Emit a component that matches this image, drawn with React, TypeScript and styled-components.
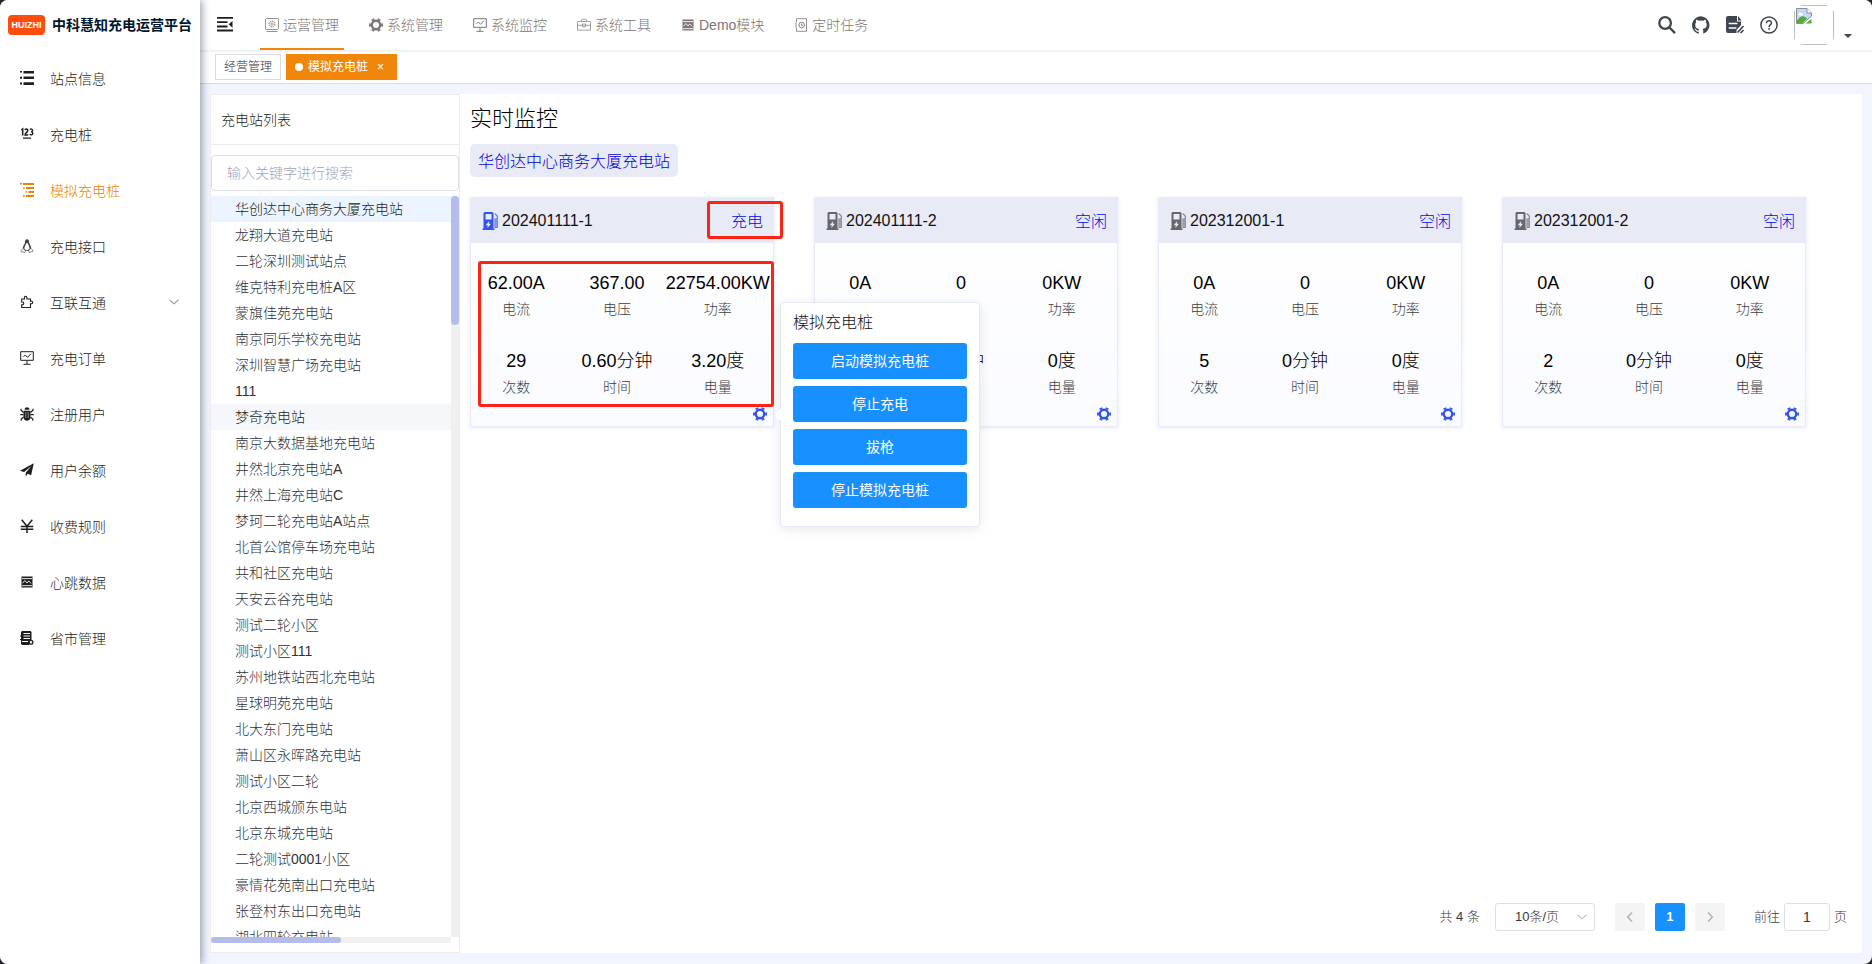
import React, { useState } from 'react';
import styled, { createGlobalStyle, css } from 'styled-components';

const GlobalStyle = createGlobalStyle`
  *, *::before, *::after { box-sizing: border-box; }
  body {
    margin: 0;
    background: #26282c;
    color: #1c1e21;
    font-family: "Liberation Sans", "Noto Sans CJK SC", sans-serif;
    font-size: 14px;
    line-height: 20px;
    font-weight: 300;
  }
  button, input, select { font: inherit; color: inherit; margin: 0; }
  button { cursor: pointer; }
  a { color: inherit; text-decoration: none; }
  h1, h2, h3, p, ul, dl, dd { margin: 0; padding: 0; font-weight: inherit; }
  ul { list-style: none; }
`;

/* ---------- icons ---------- */

const Svg = styled.svg<{ $size: number }>`
  display: block;
  flex: none;
  width: ${(p) => p.$size}px;
  height: ${(p) => p.$size}px;
  fill: none;
  stroke: currentColor;
`;

type IconName =
  | 'list' | 'number' | 'tree' | 'penguin' | 'puzzle' | 'monitor' | 'bug' | 'plane'
  | 'yen' | 'pulse' | 'dict' | 'system' | 'gear' | 'tool' | 'job' | 'fold' | 'search'
  | 'github' | 'doc' | 'question' | 'pump' | 'down' | 'left' | 'right' | 'broken';

const solid = { fill: 'currentColor', stroke: 'none' };

const drawings: Record<IconName, { box: number; body: React.ReactNode }> = {
  list: {
    box: 14,
    body: <path {...solid} d="M0 0h2v1.6H0zM3.500 0H14v2.400H3.500zM0 5.800h2v2H0zM3.500 5.400H14v2.600H3.500zM0 11.600h2v2H0zM3.500 11.200H14V14H3.500z" />,
  },
  number: {
    box: 14,
    body: (
      <>
        <path strokeWidth="1.500" d="M1.200 3 2.700 2v6.500M5 3.200C5.200 1.600 8 1.700 7.800 3.400 7.700 4.800 5 6.700 5 7.900h3.200" />
        <path strokeWidth="1.400" d="M10 2.600c.6-.9 2.600-.7 2.600.7 0 1-.8 1.500-1.500 1.500.8 0 1.700.5 1.700 1.500 0 1.700-2.300 2-3 .8" />
        <path {...solid} d="M3 10.500h8v1.300H3z" />
      </>
    ),
  },
  tree: {
    box: 14,
    body: <path {...solid} d="M0 0h2v1.500H0zM3 0h11v2H3zM3 4.500h1.800v1.300H3zM6 4h8v2H6zM5.500 8.300h1.700v1.200H5.500zM8.500 8H14v2H8.500zM3 12.300h1.800v1.400H3zM6 12h8v2H6z" />,
  },
  penguin: {
    box: 14,
    body: (
      <>
        <path {...solid} d="M7 .3C5.400.3 4.900 1.600 5 3.500c0 1.600-1.900 2.800-2.200 5.500l1 1.300L5.700 12h2.700l2-2.100.9-.6C11.100 6.600 9.200 5.400 9.200 3.500 9.200 1.600 8.600.3 7 .3Z" opacity=".85" />
        <path fill="#fff" stroke="none" d="M6 4.200h2c.2 2 1.500 3 1.600 5.300L8 11.300H6L4.300 9.500C4.500 7.200 5.900 6 6 4.200Z" />
        <path fill="#fff" strokeWidth=".5" d="m3.300 9.300 2.400 3-.7 1.200-4-.8.300-1.500zM10.900 9.300l-2.100 2.200.3 2 3.900-1.200-.6-1.500z" />
      </>
    ),
  },
  puzzle: {
    box: 14,
    body: <path strokeWidth="1.100" d="M1.700 4h2.800C3.500.5 7.600.4 6.900 4H10.500v2.300c2.900-1 3 3.100 0 2.400V12.500H1.700V9.700c2.700.6 2.700-3.200 0-2.700z" />,
  },
  monitor: {
    box: 14,
    body: <path strokeWidth="1" d="M1 .7h12.300v8.600H.7V.7zM7 9.500v3.500M3.500 13.300h7M3.500 5.800 5.300 4l2.200 2.300L11 2.700" />,
  },
  bug: {
    box: 14,
    body: (
      <>
        <path {...solid} d="M4.500 2.700C4.800-.6 9.300-.6 9.500 2.700zM3.500 3.700h7v6.500c0 4.600-7 4.600-7 0z" />
        <path strokeWidth="1.200" d="M3.500 5.500 1 3.300V1.800M.3 7.600h3.200M3.600 10 1.200 12v1.700M10.500 5.500 13 3.300V1.800M13.700 7.600h-3.200M10.400 10l2.400 2v1.700" />
        <path stroke="#fff" strokeWidth=".7" d="M5.800 5v6M8.200 5v6" opacity=".7" />
      </>
    ),
  },
  plane: {
    box: 14,
    body: <path {...solid} d="M13.800.2 0 7.700l4 1.400L11.500 3 5.700 9.800v3.700l2-2.700 3.400 1.500z" />,
  },
  yen: {
    box: 14,
    body: <path strokeWidth="1.500" d="M1.700.7 7 7.200 12.300.7M.7 7.600h12.600M.7 10.200h12.600M7 7v7" />,
  },
  pulse: {
    box: 14,
    body: (
      <>
        <path {...solid} d="M1.500 1.500h11v11h-11z" />
        <path stroke="#fff" strokeWidth=".9" d="M2 3.600h10M2.500 8.200 4.800 5.500 7 8l1.700-2 2.600 2.500M2 10.700h10" />
      </>
    ),
  },
  dict: {
    box: 14,
    body: (
      <>
        <path {...solid} d="M2 0h8.500l1 1v8.500H9V14H2L1 13V9H0V8h1V5.500H0v-1h1V1z" />
        <path stroke="#fff" strokeWidth="1" d="M3.500 2.500H10M3.500 5H10M3.500 7.500H10M2 10.500h6" />
        <circle cx="11" cy="11.200" r="1.900" fill="#fff" strokeWidth="1.300" />
      </>
    ),
  },
  system: {
    box: 14,
    body: (
      <>
        <rect x=".5" y=".5" width="13" height="11" rx="1" strokeWidth=".8" />
        <path strokeWidth=".8" d="M1.500 13.500h11" />
        <circle cx="7" cy="6" r="3" strokeWidth="1" strokeDasharray="1.600 .7" />
        <circle cx="7" cy="6" r="1.200" strokeWidth=".7" />
      </>
    ),
  },
  gear: {
    box: 14,
    body: (
      <>
        <circle cx="7" cy="7" r="4.200" strokeWidth="2.400" />
        <path strokeWidth="3" d="M12.100 7H14M0 7h1.900M9.550 2.580l.95-1.650M4.450 11.420l-.95 1.650M4.450 2.580 3.500.93M9.550 11.420l.95 1.650" />
      </>
    ),
  },
  tool: {
    box: 14,
    body: <path strokeWidth=".7" d="M1 3.500h12l.5.700v8H.5v-8zM4.500 3.500V2l.8-.8h3.400l.8.800v1.500M.5 7.300h5M8.500 7.300h5M5.500 6h3v2.800h-3zM7 6.800V8" />,
  },
  job: {
    box: 14,
    body: (
      <>
        <path strokeWidth=".8" d="M2.500 4V.7h10v12.600h-10V10M1 5h2M1 7h2M1 9h2" />
        <circle cx="7.700" cy="7" r="2.800" strokeWidth=".9" />
        <path strokeWidth=".9" d="M7.500 5.500V7.300H9" />
      </>
    ),
  },
  fold: {
    box: 16,
    body: <path {...solid} d="M0 1h16v1.800H0zM0 5.300h10.500v1.800H0zM0 9.600h10.500v1.800H0zM0 13.600h16v1.800H0zM15.500 5v6.700L11.700 8.300z" />,
  },
  search: {
    box: 18,
    body: <path strokeWidth="2.300" d="M12.900 7A5.800 5.800 0 1 1 1.300 7a5.800 5.800 0 0 1 11.600 0ZM11.200 11.200l5.800 5.900" />,
  },
  github: {
    box: 16,
    body: <path {...solid} d="M8 .2a8 8 0 0 0-2.500 15.600c.4.100.5-.2.500-.4v-1.500c-2.200.5-2.700-1-2.700-1-.4-.9-.9-1.200-.9-1.200-.7-.5.100-.5.100-.5.800.1 1.200.8 1.200.8.700 1.200 1.900.9 2.300.7.100-.5.300-.9.500-1.100-1.800-.2-3.600-.9-3.600-4 0-.900.300-1.600.8-2.100-.1-.2-.4-1 .1-2.100 0 0 .7-.2 2.200.8a7.600 7.600 0 0 1 4 0c1.500-1 2.200-.8 2.200-.8.400 1.100.2 1.900.1 2.100.5.600.8 1.300.8 2.100 0 3.100-1.900 3.700-3.700 3.900.3.300.6.800.6 1.500v2.200c0 .2.100.5.500.4A8 8 0 0 0 8 .2Z" />,
  },
  doc: {
    box: 18,
    body: (
      <>
        <path {...solid} d="M2 0h9v5.500h4V9l-4.500 5v3H2Q0 17 0 15V2Q0 0 2 0ZM12 0l3.500 4.500H12z" />
        <path stroke="#fff" strokeWidth="1.500" strokeLinecap="round" d="M3.300 7.500h7.500M3.300 12h6.500" />
        <path strokeWidth="1.600" d="m11.500 16.500 6-6.500M14.500 17l3-3" />
      </>
    ),
  },
  question: {
    box: 18,
    body: (
      <>
        <circle cx="9" cy="9" r="8.100" strokeWidth="1.500" />
        <path strokeWidth="1.500" d="M6.500 7.200C6.500 3.700 11.600 4 11.500 7c0 1.700-2.400 1.700-2.400 4" />
        <circle cx="9.100" cy="12.900" r=".9" {...solid} />
      </>
    ),
  },
  pump: {
    box: 18,
    body: (
      <>
        <path {...solid} fillRule="evenodd" d="M2.500 0h8l1 1v15.500h1V18H.5v-1.500h1V1zM3.500 2v5.500h6V2zM7.300 9l-3.600 4.200h2.200L5.300 16l3.800-4.300H6.800z" />
        <path strokeWidth="1.300" opacity=".7" d="M12.800 1.500 15.300 4v11.300h-2.300V6.500" />
        <path strokeWidth="1.400" opacity=".45" d="M14.200 6v8.500" />
      </>
    ),
  },
  down: { box: 12, body: <path strokeWidth="1.100" d="m1.500 3.800 4.500 4 4.500-4" /> },
  left: { box: 12, body: <path strokeWidth="1.600" d="M8 1.500 3.700 6 8 10.500" /> },
  right: { box: 12, body: <path strokeWidth="1.600" d="M4 1.500 8.300 6 4 10.500" /> },
  broken: {
    box: 16,
    body: (
      <>
        <path fill="#c5d8f8" stroke="#8b8f94" d="M.5.5h10.500l4.500 4.500v3l-8.500 7.500H.5z" />
        <path fill="#fff" stroke="#8b8f94" d="M11 .5V5h4.500" />
        <path fill="#fff" stroke="none" d="M2.500 6.500c0-2 2.500-2.500 3-1 1.500-.3 2 1.500.8 1.900H3z" />
        <path fill="#4fae32" stroke="none" d="M1 15v-2.500Q5 7 8 8.500q2 .5 3 2L6.500 15z" />
        <path fill="#4fae32" stroke="none" d="M15.500 11v4.500H9.700z" />
      </>
    ),
  },
};

function Icon({ name, size = 14 }: { name: IconName; size?: number }) {
  const { box, body } = drawings[name];
  return (
    <Svg $size={size} viewBox={`0 0 ${box} ${box}`} aria-hidden="true">
      {body}
    </Svg>
  );
}

/* ---------- shell ---------- */

const Shell = styled.div`
  display: flex;
  height: 100vh;
  border-radius: 8px;
  overflow: hidden;
  background: #f2f5ff;
`;

const Sidebar = styled.aside`
  position: relative;
  z-index: 2;
  flex: none;
  width: 200px;
  background: #fff;
  box-shadow: 2px 0 8px rgba(0, 21, 41, 0.4);
`;

const Brand = styled.a`
  display: flex;
  align-items: center;
  gap: 7px;
  height: 50px;
  padding-left: 8px;
`;

const BrandBadge = styled.span`
  width: 37px;
  height: 20px;
  border-radius: 4px;
  background: #ff4d0d;
  color: #fff;
  font-size: 9px;
  font-weight: 700;
  line-height: 20px;
  text-align: center;
`;

const BrandName = styled.span`
  color: #001529;
  font-weight: 700;
  white-space: nowrap;
`;

const MenuLink = styled.a<{ $active?: boolean }>`
  display: flex;
  align-items: center;
  gap: 16px;
  height: 56px;
  padding: 0 20px;
  color: ${(p) => (p.$active ? '#f08000' : '#1c1e21')};
`;

const MenuLabel = styled.span`
  padding-top: 2px;
`;

const MenuArrow = styled.span`
  margin-left: auto;
  color: #909399;
`;

const Main = styled.div`
  display: flex;
  flex: 1;
  flex-direction: column;
  min-width: 0;
`;

const Header = styled.header`
  position: relative;
  display: flex;
  flex: none;
  align-items: center;
  height: 50px;
  padding: 0 20px 0 17px;
  background: #fff;
  box-shadow: 0 1px 3px rgba(0, 21, 41, 0.1);
`;

const IconButton = styled.button`
  padding: 0;
  border: 0;
  background: none;
  color: #3f4650;
`;

const FoldButton = styled(IconButton)`
  margin: 0 27px 2px 0;
  color: #1d1d1f;
`;

const TopNav = styled.nav`
  display: flex;
  gap: 20px;
  height: 50px;
`;

const TopLink = styled.a<{ $active?: boolean }>`
  display: flex;
  align-items: center;
  gap: 4px;
  padding: 2px 5px 0;
  border-bottom: 2px solid ${(p) => (p.$active ? '#f0870b' : 'transparent')};
  color: #7d7575;
  white-space: nowrap;
`;

const HeaderTools = styled.div`
  display: flex;
  align-items: center;
  gap: 16px;
  height: 50px;
  margin-left: auto;
`;

const Account = styled.button`
  display: flex;
  align-items: flex-end;
  gap: 10px;
  padding: 0;
  border: 0;
  background: none;
`;

const edge = 'linear-gradient(#c0c0c0, #c0c0c0) no-repeat';

const Avatar = styled.span`
  width: 40px;
  height: 40px;
  padding: 3px 2px;
  background:
    ${edge} top / 26px 1px,
    ${edge} bottom / 26px 1px,
    ${edge} left / 1px 28px,
    ${edge} right / 1px 28px;
`;

const Caret = styled.span`
  margin-bottom: 7px;
  border: 4px solid transparent;
  border-top-color: #3f4650;
  border-bottom: 0;
`;

const TabBar = styled.div`
  display: flex;
  flex: none;
  gap: 5px;
  height: 34px;
  padding: 4px 15px 0;
  border-bottom: 1px solid #d8dce5;
  background: #fff;
`;

const Tab = styled.a<{ $active?: boolean }>`
  display: flex;
  align-items: center;
  gap: 5px;
  height: 26px;
  padding: 0 8px;
  border: 1px solid #d8dce5;
  color: #2c313c;
  font-size: 12px;
  line-height: 16px;
  ${(p) =>
    p.$active &&
    css`
      border-color: #f0870b;
      background: #f0870b;
      color: #fff;
      font-weight: 400;
    `}
`;

const TabDot = styled.span`
  width: 8px;
  height: 8px;
  border-radius: 50%;
  background: #fff;
`;

const TabClose = styled.span`
  width: 15px;
  text-align: center;
`;

const Workspace = styled.main`
  display: flex;
  flex: 1;
  min-height: 0;
  padding: 10px 10px 11px;
`;

/* ---------- station list ---------- */

const StationPanel = styled.section`
  display: flex;
  flex: none;
  flex-direction: column;
  width: 250px;
  border: 1px solid #f0ecee;
  background: #fff;
`;

const PanelTitle = styled.h2`
  height: 50px;
  padding: 0 10px;
  border-bottom: 1px solid #f0ecee;
  font-size: 14px;
  line-height: 50px;
`;

const SearchInput = styled.input`
  height: 36px;
  margin: 10px 0 5px;
  padding: 0 15px;
  border: 1px solid #dcdfe6;
  border-radius: 4px;
  outline: 0;
  background: #fff;
  &::placeholder { color: #9ea5b3; }
`;

const ScrollFrame = styled.div`
  display: grid;
  flex: 1;
  grid-template: minmax(0, 1fr) 6px / minmax(0, 1fr) 8px;
  min-height: 0;
  margin-bottom: 9px;
`;

const StationItems = styled.ul`
  overflow: auto;
  scrollbar-width: none;
`;

const StationButton = styled.button<{ $tone?: 'current' | 'hover' }>`
  display: block;
  width: 100%;
  height: 26px;
  padding: 0 24px;
  border: 0;
  background: ${(p) => (p.$tone === 'current' ? '#ecf5ff' : p.$tone === 'hover' ? '#f5f7fa' : 'transparent')};
  color: ${(p) => (p.$tone ? '#1c1e21' : '#303236')};
  line-height: 26px;
  text-align: left;
  white-space: nowrap;
`;

const Track = styled.div<{ $across?: boolean }>`
  background: #f0f0f0;
  &::before {
    content: '';
    display: block;
    width: ${(p) => (p.$across ? '54%' : '100%')};
    height: ${(p) => (p.$across ? '6px' : '129px')};
    border-radius: 4px;
    background: #b5bcec;
  }
`;

/* ---------- monitoring ---------- */

const Board = styled.section`
  display: flex;
  flex: 1;
  flex-direction: column;
  align-items: flex-start;
  min-width: 0;
  padding: 10px 15px 22px 10px;
  background: #fff;
`;

const BoardTitle = styled.h1`
  color: #000;
  font-size: 22px;
  line-height: 30px;
`;

const StationTag = styled.p`
  margin: 10px 0 20px;
  padding: 5px 8px 3px;
  border-radius: 5px;
  background: #e8eaf6;
  color: #0000e0;
  font-size: 16px;
  line-height: 25px;
`;

const CardGrid = styled.div`
  display: grid;
  flex: 1;
  align-self: stretch;
  align-content: start;
  grid-template-columns: repeat(4, minmax(0, 1fr));
  gap: 40px;
  padding-right: 41px;
`;

const Card = styled.article`
  position: relative;
  border: 1px solid #e8eaf8;
  background: linear-gradient(#fff, #fafbff);
  box-shadow: 0 1px 4px rgba(60, 90, 220, 0.14);
`;

const CardHeader = styled.header<{ $busy?: boolean }>`
  display: flex;
  align-items: center;
  gap: 2px;
  height: 45px;
  padding: 0 10px 0 11px;
  background: #e8eaf6;
  color: ${(p) => (p.$busy ? '#3355e6' : '#66676c')};
`;

const CardName = styled.h3`
  color: #111;
  font-size: 16px;
  line-height: 24px;
`;

const CardState = styled.span`
  margin-left: auto;
  padding-top: 2px;
  color: #0010e0;
  font-size: 16px;
  line-height: 24px;
`;

const Stats = styled.dl`
  display: grid;
  grid-template-columns: repeat(3, minmax(0, 1fr));
  gap: 26px 0;
  margin: 0 5px 0 -5px;
  padding-top: 27px;
`;

const Stat = styled.div`
  display: flex;
  flex-direction: column-reverse;
  align-items: center;
  white-space: nowrap;
`;

const StatValue = styled.dd`
  color: #000;
  font-size: 18px;
  line-height: 26px;
`;

const StatLabel = styled.dt`
  color: #3c3e42;
  line-height: 26px;
`;

const CardFooter = styled.footer`
  display: flex;
  justify-content: flex-end;
  padding: 7px 6px 5px;
`;

const SettingsButton = styled(IconButton)`
  color: #3355e6;
`;

const Highlight = styled.span<{ $area: 'state' | 'stats' }>`
  position: absolute;
  border: 3px solid #ff2216;
  border-radius: 3px;
  pointer-events: none;
  ${(p) =>
    p.$area === 'state'
      ? css`top: 3px; right: -10px; width: 76px; height: 38px;`
      : css`top: 63px; right: -1px; left: 7px; height: 146px;`}
`;

const Popover = styled.div`
  position: absolute;
  z-index: 3;
  top: 104px;
  left: calc(100% + 7px);
  width: 200px;
  padding: 8px 12px 18px;
  border: 1px solid #e6e9f4;
  border-radius: 4px;
  background: #fff;
  box-shadow: 0 2px 12px rgba(0, 0, 0, 0.1);
  &::before {
    content: '';
    position: absolute;
    bottom: 107px;
    left: -5px;
    width: 8px;
    height: 8px;
    background: #fff;
    transform: rotate(45deg);
  }
`;

const PopoverTitle = styled.h3`
  margin-bottom: 8px;
  color: #111;
  font-size: 16px;
  line-height: 24px;
`;

const PopoverActions = styled.div`
  display: grid;
  gap: 7px;
`;

const ActionButton = styled.button`
  height: 36px;
  border: 0;
  border-radius: 3px;
  background: #1890ff;
  color: #fff;
  font-weight: 400;
`;

/* ---------- pagination ---------- */

const Pagination = styled.nav`
  display: flex;
  align-items: center;
  align-self: flex-end;
  height: 28px;
  color: #36383c;
  font-size: 13px;
`;

const SizePicker = styled.label`
  display: flex;
  align-items: center;
  width: 100px;
  height: 28px;
  margin: 0 20px 0 15px;
  padding-right: 6px;
  border: 1px solid #dcdfe6;
  border-radius: 3px;
  color: #b4bac6;
`;

const SizeSelect = styled.select`
  flex: 1;
  min-width: 0;
  padding: 0 0 0 19px;
  border: 0;
  outline: 0;
  appearance: none;
  background: none;
  color: #36383c;
`;

const PageButtons = styled.div`
  display: flex;
  gap: 10px;
  margin-right: 29px;
`;

const PageButton = styled.button<{ $current?: boolean }>`
  display: grid;
  place-items: center;
  width: 30px;
  height: 28px;
  padding: 0;
  border: 0;
  border-radius: 2px;
  background: ${(p) => (p.$current ? '#1890ff' : '#f4f4f5')};
  color: ${(p) => (p.$current ? '#fff' : '#b0b4bc')};
  font-weight: 700;
`;

const JumpLabel = styled.label`
  display: flex;
  align-items: center;
  gap: 4px;
`;

const JumpInput = styled.input`
  width: 46px;
  height: 28px;
  padding: 0;
  border: 1px solid #dcdfe6;
  border-radius: 3px;
  outline: 0;
  font-size: 14px;
  text-align: center;
`;

/* ---------- data ---------- */

const menu: { label: string; icon: IconName; active?: boolean; nested?: boolean }[] = [
  { label: '站点信息', icon: 'list' },
  { label: '充电桩', icon: 'number' },
  { label: '模拟充电桩', icon: 'tree', active: true },
  { label: '充电接口', icon: 'penguin' },
  { label: '互联互通', icon: 'puzzle', nested: true },
  { label: '充电订单', icon: 'monitor' },
  { label: '注册用户', icon: 'bug' },
  { label: '用户余额', icon: 'plane' },
  { label: '收费规则', icon: 'yen' },
  { label: '心跳数据', icon: 'pulse' },
  { label: '省市管理', icon: 'dict' },
];

const topNav: { label: string; icon: IconName }[] = [
  { label: '运营管理', icon: 'system' },
  { label: '系统管理', icon: 'gear' },
  { label: '系统监控', icon: 'monitor' },
  { label: '系统工具', icon: 'tool' },
  { label: 'Demo模块', icon: 'pulse' },
  { label: '定时任务', icon: 'job' },
];

const stations = [
  '华创达中心商务大厦充电站', '龙翔大道充电站', '二轮深圳测试站点', '维克特利充电桩A区',
  '蒙旗佳苑充电站', '南京同乐学校充电站', '深圳智慧广场充电站', '111', '梦奇充电站',
  '南京大数据基地充电站', '井然北京充电站A', '井然上海充电站C', '梦珂二轮充电站A站点',
  '北首公馆停车场充电站', '共和社区充电站', '天安云谷充电站', '测试二轮小区', '测试小区111',
  '苏州地铁站西北充电站', '星球明苑充电站', '北大东门充电站', '萧山区永晖路充电站',
  '测试小区二轮', '北京西城颁东电站', '北京东城充电站', '二轮测试0001小区',
  '豪情花苑南出口充电站', '张登村东出口充电站', '湖北四轮充电站',
];

const statLabels = ['电流', '电压', '功率', '次数', '时间', '电量'];

const chargers = [
  { name: '202401111-1', busy: true, values: ['62.00A', '367.00', '22754.00KW', '29', '0.60分钟', '3.20度'] },
  { name: '202401111-2', values: ['0A', '0', '0KW', '0', '0分钟', '0度'] },
  { name: '202312001-1', values: ['0A', '0', '0KW', '5', '0分钟', '0度'] },
  { name: '202312001-2', values: ['0A', '0', '0KW', '2', '0分钟', '0度'] },
];

const actions = ['启动模拟充电桩', '停止充电', '拔枪', '停止模拟充电桩'];

export default function App() {
  const [keyword, setKeyword] = useState('');
  const [page, setPage] = useState('1');

  return (
    <>
      <GlobalStyle />
      <Shell>
        <Sidebar>
          <Brand href="#">
            <BrandBadge>HUIZHI</BrandBadge>
            <BrandName>中科慧知充电运营平台</BrandName>
          </Brand>
          <nav>
            {menu.map((item) => (
              <MenuLink key={item.label} href="#" $active={item.active}>
                <Icon name={item.icon} />
                <MenuLabel>{item.label}</MenuLabel>
                {item.nested && <MenuArrow><Icon name="down" size={12} /></MenuArrow>}
              </MenuLink>
            ))}
          </nav>
        </Sidebar>

        <Main>
          <Header>
            <FoldButton aria-label="收起菜单"><Icon name="fold" size={16} /></FoldButton>
            <TopNav>
              {topNav.map((item, i) => (
                <TopLink key={item.label} href="#" $active={i === 0}>
                  <Icon name={item.icon} />
                  {item.label}
                </TopLink>
              ))}
            </TopNav>
            <HeaderTools>
              <IconButton aria-label="搜索"><Icon name="search" size={18} /></IconButton>
              <IconButton aria-label="源码"><Icon name="github" size={18} /></IconButton>
              <IconButton aria-label="文档"><Icon name="doc" size={18} /></IconButton>
              <IconButton aria-label="帮助"><Icon name="question" size={18} /></IconButton>
              <Account aria-label="账户">
                <Avatar><Icon name="broken" size={16} /></Avatar>
                <Caret />
              </Account>
            </HeaderTools>
          </Header>

          <TabBar>
            <Tab href="#">经营管理</Tab>
            <Tab href="#" $active>
              <TabDot />
              模拟充电桩
              <TabClose>×</TabClose>
            </Tab>
          </TabBar>

          <Workspace>
            <StationPanel>
              <PanelTitle>充电站列表</PanelTitle>
              <SearchInput
                aria-label="搜索充电站"
                placeholder="输入关键字进行搜索"
                value={keyword}
                onChange={(e) => setKeyword(e.target.value)}
              />
              <ScrollFrame>
                <StationItems>
                  {stations.filter((s) => s.includes(keyword)).map((name) => (
                    <li key={name}>
                      <StationButton
                        $tone={name === stations[0] ? 'current' : name === '梦奇充电站' ? 'hover' : undefined}
                      >
                        {name}
                      </StationButton>
                    </li>
                  ))}
                </StationItems>
                <Track />
                <Track $across />
              </ScrollFrame>
            </StationPanel>

            <Board>
              <BoardTitle>实时监控</BoardTitle>
              <StationTag>{stations[0]}</StationTag>
              <CardGrid>
                {chargers.map((c) => (
                  <Card key={c.name}>
                    <CardHeader $busy={c.busy}>
                      <Icon name="pump" size={18} />
                      <CardName>{c.name}</CardName>
                      <CardState>{c.busy ? '充电' : '空闲'}</CardState>
                    </CardHeader>
                    <Stats>
                      {statLabels.map((label, i) => (
                        <Stat key={label}>
                          <StatLabel>{label}</StatLabel>
                          <StatValue>{c.values[i]}</StatValue>
                        </Stat>
                      ))}
                    </Stats>
                    <CardFooter>
                      <SettingsButton aria-label="设置"><Icon name="gear" size={14} /></SettingsButton>
                    </CardFooter>
                    {c.busy && (
                      <>
                        <Highlight $area="state" />
                        <Highlight $area="stats" />
                        <Popover role="dialog" aria-label="模拟充电桩">
                          <PopoverTitle>模拟充电桩</PopoverTitle>
                          <PopoverActions>
                            {actions.map((a) => <ActionButton key={a}>{a}</ActionButton>)}
                          </PopoverActions>
                        </Popover>
                      </>
                    )}
                  </Card>
                ))}
              </CardGrid>
              <Pagination aria-label="分页">
                共 4 条
                <SizePicker>
                  <SizeSelect aria-label="每页条数" defaultValue="10">
                    <option value="10">10条/页</option>
                    <option value="20">20条/页</option>
                  </SizeSelect>
                  <Icon name="down" size={12} />
                </SizePicker>
                <PageButtons>
                  <PageButton aria-label="上一页"><Icon name="left" size={12} /></PageButton>
                  <PageButton $current>1</PageButton>
                  <PageButton aria-label="下一页"><Icon name="right" size={12} /></PageButton>
                </PageButtons>
                <JumpLabel>
                  前往
                  <JumpInput value={page} onChange={(e) => setPage(e.target.value)} />
                  页
                </JumpLabel>
              </Pagination>
            </Board>
          </Workspace>
        </Main>
      </Shell>
    </>
  );
}
